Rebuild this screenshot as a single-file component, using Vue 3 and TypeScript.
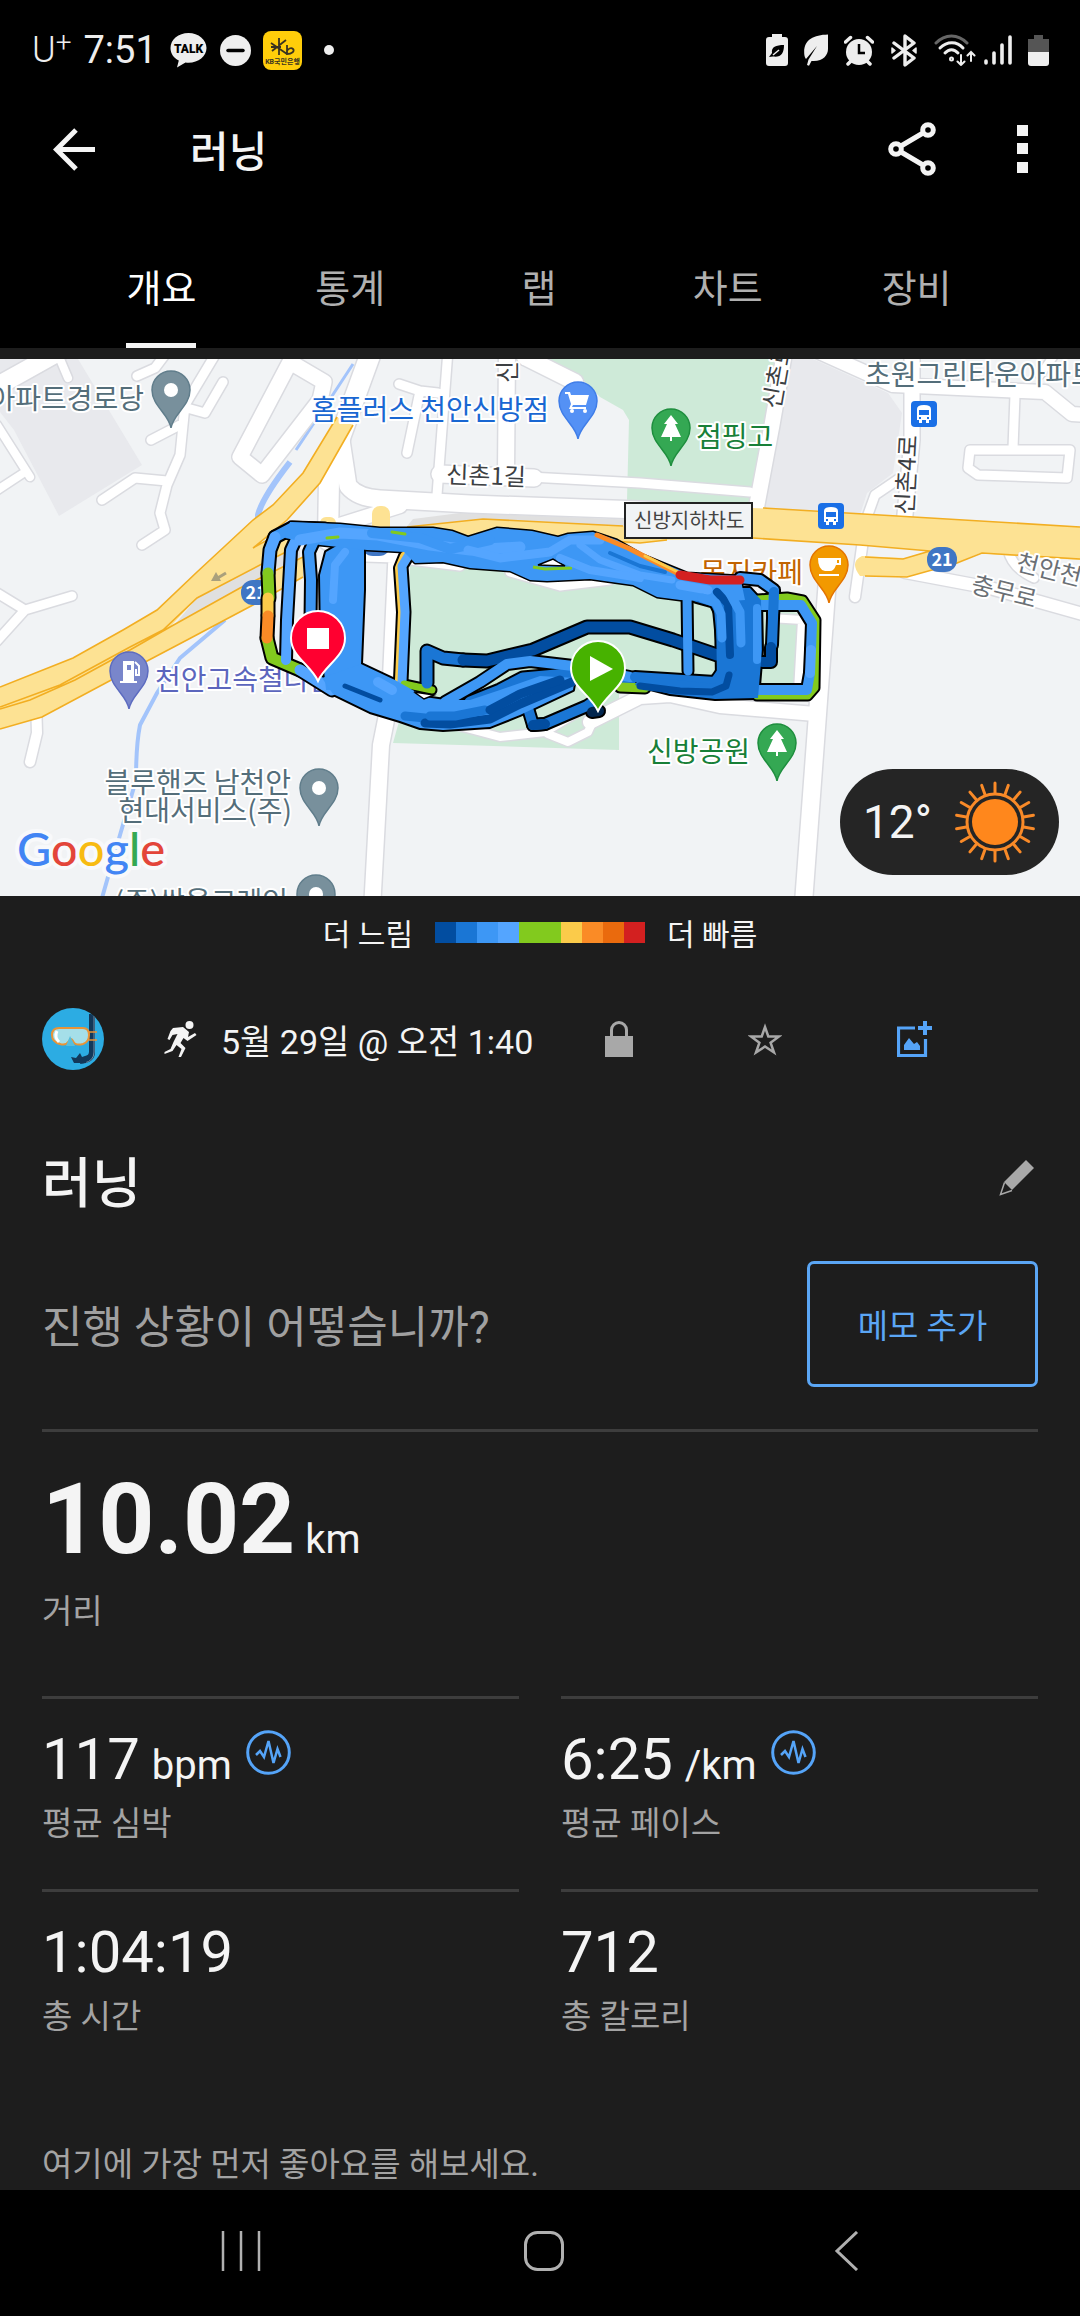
<script setup lang="ts">
interface Line { d: string; w: number; c?: string }
interface Pin { x: number; y: number; fill: string; edge: string; kind: 'dot' | 'cart' | 'tree' | 'cup' | 'fuel' }
interface MapLabel { text: string; x: number; y: number; color: string; size?: number; end?: boolean; turn?: number }

const tabs: string[] = ['개요', '통계', '랩', '차트', '장비']
const legend: string[] = ['#024da0', '#1a76d5', '#3d97f5', '#54a5ff', '#82ca1e', '#82ca1e', '#fbcb4a', '#fa8b26', '#ea6a0d', '#d32020']

const stats = [
  { value: '117', unit: 'bpm', label: '평균 심박', chart: true },
  { value: '6:25', unit: '/km', label: '평균 페이스', chart: true },
  { value: '1:04:19', unit: '', label: '총 시간', chart: false },
  { value: '712', unit: '', label: '총 칼로리', chart: false },
]

const rays: number[] = Array.from({ length: 18 }, (_, i) => i * 20)

const roads: Line[] = [
  { d: 'M-6 388 L62 350', w: 18 }, { d: 'M57 352 L68 378', w: 8 },
  { d: 'M-3 425 L30 477 M22 474 L-4 491', w: 8 },
  { d: 'M215 355 L185 405 L180 455 L167 485 L160 513 L165 530 L142 545 M137 376 L155 368 L167 352 M187 408 L205 413 L223 382 M180 425 L151 440 M167 481 L135 478 L102 500', w: 9 },
  { d: 'M-3 593 L25 610 L72 596 M25 610 L-3 641', w: 9 },
  { d: 'M290 362 L324 382 L320 400 L262 475 L240 457 Z', w: 15 },
  { d: 'M372 350 L341 435 L329 480 L328 540', w: 20 },
  { d: 'M341 440 L348 486 Q358 498 380 499 L470 504 L640 510 L760 515', w: 17 },
  { d: 'M330 528 L400 506', w: 14 },
  { d: 'M448 350 L437 495 M399 384 L420 391 L438 393 M420 391 L407 453', w: 9 },
  { d: 'M507 350 L506 475', w: 16 }, { d: 'M440 474 L534 478', w: 17 },
  { d: 'M530 477 L640 483 L750 492', w: 9 }, { d: 'M525 357 L575 382', w: 16 },
  { d: 'M785 350 L772 425 L755 515', w: 15 },
  { d: 'M815 350 L893 385 L1045 392 L1072 414 L1090 415', w: 14 },
  { d: 'M912 350 L912 440 L904 525', w: 15 }, { d: 'M900 478 L875 495 L866 520', w: 9 },
  { d: 'M1015 395 L1013 448 M970 450 L1070 450 L1067 478 L978 475 L968 468 Z', w: 9 },
  { d: 'M863 540 L855 597', w: 10 }, { d: 'M905 572 L990 588 L1090 616', w: 12 },
  { d: 'M1008 550 Q1012 568 1034 578', w: 9 },
  { d: 'M828 572 L823 640 L803 910', w: 17 },
  { d: 'M590 722 L640 697 L670 695 L720 706 L815 714', w: 14 },
  { d: 'M392 690 L381 745 L372 910', w: 16 },
  { d: 'M395 545 L388 700 M350 555 L410 557', w: 12 },
  { d: 'M36 700 L37 733 L30 762', w: 10 },
  { d: 'M455 725 L500 737 L545 732 L590 705 M548 734 L568 742 L588 732 L597 712', w: 8 },
  { d: 'M410 560 L460 566 M510 572 L560 586 L610 580', w: 9 },
  { d: 'M770 618 L802 620 L798 692', w: 8 },
  { d: 'M1040 375 L1058 350', w: 8 },
]

const track: Line[] = [
  { d: 'M325 529 L292 528 L275 537', c: '#3d97f5', w: 11 },
  { d: 'M275 537 L270 550 L268 573', c: '#54a5ff', w: 11 },
  { d: 'M267 638 L272 658 L300 670', c: '#82ca1e', w: 11 },
  { d: 'M268 573 L269 598', c: '#82ca1e', w: 11 },
  { d: 'M268 598 L268 615', c: '#fbcb4a', w: 11 },
  { d: 'M268 616 L267 638', c: '#fa8b26', w: 11 },
  { d: 'M300 670 L316 680 L332 690', c: '#54a5ff', w: 11 },
  { d: 'M298 535 L291 550 L287 620 L286 660', c: '#54a5ff', w: 10 },
  { d: 'M316 537 L309 552 L311 580 L310 660', c: '#3d97f5', w: 10 },
  { d: 'M404 556 L399 568 L402 612 L399 680', c: '#fbcb4a', w: 8 },
  { d: 'M410 553 L402 566 L405 612 L402 682', c: '#54a5ff', w: 9 },
  { d: 'M404 684 L432 690', c: '#82ca1e', w: 7 },
  { d: 'M427 683 L427 651 L443 658 L463 660', c: '#1a76d5', w: 11 },
  { d: 'M463 660 L487 661 L533 650 L587 627 L630 627 L673 640 L717 655', c: '#024da0', w: 11 },
  { d: 'M527 705 L533 725 L545 724 L587 706 L596 700', c: '#1a76d5', w: 10 },
  { d: 'M533 725 L545 724', c: '#024da0', w: 10 },
  { d: 'M592 712 L599 711', c: '#02264f', w: 10 },
  { d: 'M470 702 L500 690 L523 678 L567 674 L605 680 L630 683', c: '#1a76d5', w: 11 },
  { d: 'M445 702 L480 682 L507 664 L530 661 L573 666 L630 677', c: '#3d97f5', w: 10 },
  { d: 'M620 687 L645 688', c: '#82ca1e', w: 9 },
  { d: 'M758 599 L787 597 L803 600 L816 620 L815 688 L808 696 L757 696', c: '#82ca1e', w: 7 },
  { d: 'M757 605 L801 605 L812 623 L811 650 M810 673 L807 690 L757 690', c: '#3d97f5', w: 10 },
  { d: 'M811 650 L810 673', c: '#54a5ff', w: 10 },
  { d: 'M740 578 L760 580 L774 590 L773 615', c: '#3d97f5', w: 10 },
  { d: 'M774 592 L772 645', c: '#1a76d5', w: 10 },
  { d: 'M771 647 L771 662 L762 662', c: '#024da0', w: 10 },
  { d: 'M635 677 L715 682 L727 665', c: '#1a76d5', w: 10 },
  { d: 'M697 597 L715 602 L721 614 L722 680', c: '#1a76d5', w: 10 },
  { d: 'M687 595 L688 671', c: '#3d97f5', w: 9 },
]

/* Stretches where many laps overlap into one solid area. */
const topBand = 'M290 522 L340 524 L380 528 L433 528 L452 531 L468 537 L497 528 L532 531 L558 537 L568 534 L593 532 L617 540 L643 555 L660 562 L687 573 L740 576 L745 600 L720 602 L680 600 L657 597 L633 585 L590 579 L547 581 L530 580 L510 571 L470 568 L443 562 L415 563 L404 552 L367 550 L320 545 L285 538 Z'
const lowBand = 'M322 678 L333 694 L370 712 L400 721 L420 728 L443 730 L490 727 L520 715 L573 690 L575 678 L540 676 L500 690 L470 700 L445 700 L425 697 L395 680 L361 664 Z'
const westMass = 'M326 552 L340 544 L364 549 L364 590 L361 664 L370 690 L326 690 L321 640 L320 575 Z'
const eastMass = 'M712 588 L750 588 L761 600 L762 650 L758 698 L715 699 L670 694 L635 685 L640 676 L715 684 L720 672 Z'

const shades: Line[] = [
  { d: 'M300 540 L340 533 L378 535 L430 545 L470 550 L520 547', c: '#54a5ff', w: 11 },
  { d: 'M372 533 L420 538 L450 549 L490 540', c: '#3d97f5', w: 10 },
  { d: 'M468 550 L500 558 L550 552 L570 540 L600 540', c: '#54a5ff', w: 9 },
  { d: 'M580 545 L600 560 L640 575 L672 580', c: '#54a5ff', w: 7 },
  { d: 'M560 558 L590 570 L640 578', c: '#54a5ff', w: 8 },
  { d: 'M610 553 L640 566 L665 572', c: '#1a76d5', w: 4 },
  { d: 'M680 585 L708 590', c: '#54a5ff', w: 9 },
  { d: 'M345 552 L335 565 L333 600', c: '#54a5ff', w: 8 },
  { d: 'M392 532 L405 534 M327 538 L338 537', c: '#82ca1e', w: 3 },
  { d: 'M597 535 L628 548 L677 573', c: '#fa8b26', w: 5 },
  { d: 'M645 556 L678 572', c: '#fbcb4a', w: 3 },
  { d: 'M680 575 L710 580 L740 580', c: '#d32020', w: 9 },
  { d: 'M717 592 L728 604 L730 655', c: '#024da0', w: 8 },
  { d: 'M640 686 L680 691 L712 692 L726 686 L729 675', c: '#024da0', w: 7 },
  { d: 'M702 598 L716 603 L721 614 L722 638', c: '#3d97f5', w: 9 },
  { d: 'M728 590 L740 612 L741 643', c: '#3d97f5', w: 9 },
  { d: 'M757 608 L757 660', c: '#3d97f5', w: 8 },
  { d: 'M378 682 L392 690', c: '#54a5ff', w: 10 },
  { d: 'M345 686 L380 700', c: '#024da0', w: 5 },
  { d: 'M405 716 L425 718', c: '#1a76d5', w: 9 },
  { d: 'M425 723 L450 724 L490 719 L520 704 L572 682', c: '#024da0', w: 9 },
  { d: 'M430 716 L455 716 L485 710', c: '#1a76d5', w: 9 },
  { d: 'M490 710 L520 694 L560 680', c: '#024da0', w: 9 },
]

const pins: Pin[] = [
  { x: 171, y: 390, fill: '#78909c', edge: '#607d8b', kind: 'dot' },
  { x: 578, y: 401, fill: '#5491f5', edge: '#3f7de8', kind: 'cart' },
  { x: 671, y: 428, fill: '#34a853', edge: '#1e8e3e', kind: 'tree' },
  { x: 829, y: 565, fill: '#f29900', edge: '#e37400', kind: 'cup' },
  { x: 129, y: 671, fill: '#7986cb', edge: '#5c6bc0', kind: 'fuel' },
  { x: 319, y: 788, fill: '#78909c', edge: '#607d8b', kind: 'dot' },
  { x: 316, y: 894, fill: '#78909c', edge: '#607d8b', kind: 'dot' },
  { x: 777, y: 743, fill: '#34a853', edge: '#1e8e3e', kind: 'tree' },
]

const labels: MapLabel[] = [
  { text: '아파트경로당', x: 144, y: 409, color: '#546e7a', end: true },
  { text: '홈플러스 천안신방점', x: 549, y: 420, color: '#1967d2', end: true },
  { text: '점핑고', x: 696, y: 447, color: '#188038' },
  { text: '초원그린타운아파트', x: 865, y: 385, color: '#546e7a' },
  { text: '신', x: 516, y: 383, color: '#3c4043', size: 24, turn: -90 },
  { text: '신촌로', x: 780, y: 410, color: '#3c4043', size: 24, turn: -80 },
  { text: '신촌4로', x: 913, y: 515, color: '#3c4043', size: 24, turn: -87 },
  { text: '신촌1길', x: 446, y: 483, color: '#3c4043', size: 24, turn: 2 },
  { text: '목지카페', x: 803, y: 583, color: '#c26401', end: true },
  { text: '천안천', x: 1015, y: 570, color: '#6b7075', size: 24, turn: 14 },
  { text: '충무로', x: 970, y: 592, color: '#6b7075', size: 24, turn: 14 },
  { text: '천안고속철나들목', x: 155, y: 690, color: '#5c66bd' },
  { text: '블루핸즈 남천안', x: 291, y: 793, color: '#546e7a', end: true },
  { text: '현대서비스(주)', x: 292, y: 821, color: '#546e7a', end: true },
  { text: '(주)쌍용크레인', x: 288, y: 912, color: '#546e7a', end: true },
  { text: '신방공원', x: 750, y: 762, color: '#188038', end: true },
]
</script>

<template>
  <div class="screen">
    <header class="top">
      <div class="status">
        <div class="status-left">
          <span class="carrier">U<sup>+</sup></span>
          <span class="clock">7:51</span>
          <svg class="talk" viewBox="0 0 37 36" width="37" height="36">
            <path d="M18.500 1C8.500 1 .5 7.600 .5 16c0 5.500 3.300 10 8.300 12.600L7 35.500l8.500-5c1 .2 2 .2 3 .2 10 0 18-6.600 18-14.700S28.500 1 18.500 1z" fill="#eee" />
            <text x="18.500" y="20.500" text-anchor="middle" font-size="12" font-weight="900" fill="#000">TALK</text>
          </svg>
          <svg class="dnd" viewBox="0 0 31 31" width="31" height="31"><circle cx="15.500" cy="15.500" r="15.500" fill="#eee" /><path d="M8 15.500h15" stroke="#000" stroke-width="3.500" stroke-linecap="round" /></svg>
          <svg class="kb" viewBox="0 0 39 39" width="39" height="39">
            <rect width="39" height="39" rx="8" fill="#ffcd0a" />
            <path d="M16 7v17M8 12l16 11M23 9L9 20M8 16h10M24 14v9c5 0 8-3 6-5s-5 0-6 2" fill="none" stroke="#3a3320" stroke-width="1.800" />
            <text x="19.500" y="33" text-anchor="middle" font-size="7" font-weight="700" fill="#3a3320">KB국민은행</text>
          </svg>
          <span class="more-dot"></span>
        </div>
        <div class="status-right">
          <svg viewBox="0 0 22 32" width="22" height="32"><path d="M6 0h10v3h3a3 3 0 0 1 3 3v23a3 3 0 0 1-3 3H3a3 3 0 0 1-3-3V6a3 3 0 0 1 3-3h3z" fill="#eee" /><path d="M18 11c-8 0-13 2-12 8l-3 4 4-.5c8 1 11-3 11-11.500zM3 23l9-6" fill="#000" /><path d="M7 21l6-5" stroke="#eee" stroke-width="1.500" /></svg>
          <svg viewBox="0 0 24 32" width="24" height="32"><path d="M24 .5C9 1-1 6 .3 20.500c.2 2.500 1 3.500 1.700 4.500L13 12 4.500 25.500 3 31l2 .8L7.500 27C19 28 24 21 24 15z" fill="#eee" /></svg>
          <svg viewBox="0 0 30 31" width="30" height="31"><circle cx="15" cy="17" r="13" fill="#eee" /><path d="M1.500 7l5-4.500M28.500 7l-5-4.500M4 29l4-4M26 29l-4-4" stroke="#eee" stroke-width="3.500" stroke-linecap="round" /><path d="M15 9v9h6" fill="none" stroke="#000" stroke-width="2.500" /></svg>
          <svg viewBox="0 0 28 33" width="28" height="33" fill="none" stroke="#eee" stroke-width="3.400" stroke-linejoin="round" stroke-linecap="round"><path d="M4 9l20 15-9 7V2l9 7L4 24" /><path d="M2 14l3 2.500L2 19zM26 14l-3 2.500 3 2.500z" stroke-width="1.500" fill="#eee" /></svg>
          <svg viewBox="0 0 42 32" width="42" height="32" fill="none" stroke="#eee" stroke-width="3" stroke-linecap="round"><path d="M2 9c9-9.500 22-9.500 31 0" stroke="#666" /><path d="M6 14c7-7 17-7 23 0M11 19c4-4.500 9-4.500 13 0" /><circle cx="17.500" cy="25" r="1" /><path d="M27 21v10m-3.500-3.500l3.500 3.500 3.500-3.500M37 27V18m-3.500 3.500L37 18l3.500 3.500" stroke-width="2" /></svg>
          <svg class="signal" viewBox="0 0 28 30" width="28" height="30" stroke="#eee" stroke-width="3.600" stroke-linecap="round"><path d="M2 26v2M10 18v10M18 10v18M26 2v26" /></svg>
          <svg viewBox="0 0 21 31" width="21" height="31"><path d="M6 0h9v4h6v13H0V4h6z" fill="#555" /><path d="M0 17h21v11a3 3 0 0 1-3 3H3a3 3 0 0 1-3-3z" fill="#eee" /></svg>
        </div>
      </div>

      <div class="appbar">
        <button aria-label="뒤로"><svg viewBox="0 0 43 43" width="43" height="43" fill="none" stroke="#f4f4f4" stroke-width="5"><path d="M42 21.500H4M23 2L3.500 21.500 23 41" /></svg></button>
        <h1>러닝</h1>
        <button class="share" aria-label="공유"><svg viewBox="0 0 48 54" width="48" height="54" fill="none" stroke="#f4f4f4" stroke-width="5"><circle cx="40" cy="8" r="5.300" /><circle cx="8" cy="27" r="5.300" /><circle cx="40" cy="46" r="5.300" /><path d="M13 24l22-13M13 30l22 13" /></svg></button>
        <button aria-label="더보기"><svg viewBox="0 0 12 48" width="12" height="48" fill="#f4f4f4"><path d="M0 0h11v11H0zM0 18h11v11H0zM0 37h11v11H0z" /></svg></button>
      </div>

      <nav class="tabs">
        <button v-for="(tab, i) in tabs" :key="tab" :class="['tab', { active: i === 0 }]"><span>{{ tab }}</span></button>
      </nav>
    </header>

    <section class="map">
      <svg class="map-svg" viewBox="0 359 1080 537" role="img" aria-label="러닝 경로">
        <rect y="359" width="1080" height="537" fill="#f1f3f5" />
        <g fill="#e8e9ed">
          <path d="M0 359H78L142 465 59 516 14 430 0 412z" />
          <path d="M785 359L763 508 860 515 867 493 893 473 902 413 888 393 813 359z" />
        </g>
        <g fill="#ceead8">
          <path d="M545 359L583 380 600 397 623 410 629 420 627 500 755 507 775 359z" />
          <path d="M410 563L480 565 560 583 630 580 700 600 800 613 800 695 619 690 619 750 393 743 405 700z" />
        </g>
        <path d="M413 519L460 513 640 520V535H400z M197 598L300 540V570L170 630z" fill="#e0e0e0" />
        <g fill="none" stroke="#a3c4fb">
          <path d="M353 364L334 393 296 450" stroke-width="3" />
          <path d="M290 462Q262 498 258 515V525" stroke-width="6" />
          <path d="M225 620L180 658 157 693 140 725Q136 745 136 780L120 835 102 898" stroke-width="4" />
        </g>
        <g fill="none" stroke="#dadbe0" stroke-linecap="round" stroke-linejoin="round">
          <path v-for="(r, i) in roads" :key="i" :d="r.d" :stroke-width="r.w + 3" />
        </g>
        <g fill="none" stroke="#fff" stroke-linecap="round" stroke-linejoin="round">
          <path v-for="(r, i) in roads" :key="i" :d="r.d" :stroke-width="r.w" />
        </g>
        <g fill="#fde293">
          <path d="M337 417L303 473 273 505 253 520 197 572 157 610 123 630 73 658 0 687V729L42 717 130 670 187 640 253 605 303 577V557L240 588 170 627 197 598 260 565 300 545V525L253 548 287 520 320 483 353 425z" />
          <path d="M407 527L483 519 623 526 753 508 880 515 1080 527V560L1000 555 980 553 957 563 907 577 860 576Q849 562 862 556L905 558 930 551 860 545 755 538 667 540 640 543 400 555z" />
          <rect x="372" y="506" width="18" height="30" rx="8" /><rect x="320" y="517" width="16" height="14" rx="6" />
        </g>
        <g fill="none" stroke="#f2ae22" stroke-width="1.600">
          <path d="M337 417L303 473 273 505 253 520 197 572 157 610 123 630 73 658 0 687M353 425L320 483 287 520 253 548 300 522M300 545L260 565 197 598 163 630 130 647 60 685 0 707M303 557L240 588 170 627 130 650 75 680 30 700 0 709M303 577L253 605 187 640 130 670 42 717 0 729M407 527L483 519 623 526M763 508L880 515 1080 527M753 538L860 545 930 551 903 559 865 557M865 576L907 577 957 563 982 553 1080 559M667 540L640 543 600 540" />
        </g>
        <path d="M226 573l-10 6" stroke="#aaa07c" stroke-width="3" /><path d="M211 581l5-9 5 9z" fill="#aaa07c" />

        <g v-for="(s, i) in [[942, 559], [256, 592], [376, 543]]" :key="i">
          <rect :x="s[0] - 15" :y="s[1] - 12" width="30" height="25" rx="12" fill="#3f76c4" />
          <text :x="s[0]" :y="s[1] + 7" text-anchor="middle" font-size="18" font-weight="700" fill="#fff" class="kr">21</text>
        </g>

        <g class="labels kr">
          <text v-for="l in labels" :key="l.text" :fill="l.color" :font-size="l.size ?? 28" :text-anchor="l.end ? 'end' : 'start'" :transform="`translate(${l.x} ${l.y}) rotate(${l.turn ?? 0})`">{{ l.text }}</text>
        </g>

        <g v-for="(b, i) in [[831, 516], [924, 414]]" :key="i" :transform="`translate(${b[0]} ${b[1]})`">
          <rect x="-13" y="-13" width="26" height="26" rx="4" fill="#1a6fe6" />
          <path d="M-7-5q0-4 7-4t7 4V6H5v3H2V6h-4v3h-3V6h-2z" fill="#fff" />
          <path d="M-5-4H5v5H-5zM-5 3h2v2h-2zM3 3h2v2H3z" fill="#1a6fe6" />
        </g>

        <rect x="625" y="503" width="127" height="35" fill="#f1f3f5" stroke="#222" stroke-width="2" />
        <text x="634" y="528" font-size="20" fill="#444" class="kr">신방지하차도</text>

        <g v-for="(p, i) in pins" :key="i" :transform="`translate(${p.x} ${p.y})`">
          <path d="M0 38C-2 24-19 16-19 0A19 19 0 1 1 19 0C19 16 2 24 0 38z" :fill="p.fill" :stroke="p.edge" stroke-width="1.500" />
          <circle v-if="p.kind === 'dot'" r="7" fill="#fff" />
          <path v-else-if="p.kind === 'tree'" d="M0-13L7-4H4L10 9H1V13H-1V9H-10L-4-4H-7z" fill="#fff" />
          <g v-else-if="p.kind === 'cart'" fill="#fff"><path d="M-13-9h5l1 3H11L8 4H-5l-1 2H8v2H-9l2-5-3-10h-3z" /><circle cx="-6" cy="10" r="2" /><circle cx="7" cy="10" r="2" /></g>
          <g v-else-if="p.kind === 'cup'" fill="#fff"><path d="M-11-7H12v7H7q-2 6-6 6h-5q-7-1-7-13zM8-5v3h2v-3z" fill-rule="evenodd" /><path d="M-10 9H10v2H-10z" /></g>
          <g v-else fill="#fff"><path d="M-6-10H5V10H8v2H-9v-2h3zM-2-6v5h4v-5z" fill-rule="evenodd" /><path d="M6-9l4 4v9H7v-6" fill="none" stroke="#fff" stroke-width="2" /></g>
        </g>

        <g stroke="#000" fill="none" stroke-linejoin="round" stroke-linecap="round">
          <path v-for="(t, i) in track" :key="i" :d="t.d" :stroke-width="t.w + 4" />
          <path :d="topBand" stroke-width="3" />
          <path :d="lowBand" stroke-width="4" />
          <path :d="westMass" stroke-width="4" />
          <path :d="eastMass" stroke-width="4" />
        </g>
        <g fill="none" stroke-linejoin="round" stroke-linecap="round">
          <path v-for="(t, i) in track" :key="i" :d="t.d" :stroke="t.c" :stroke-width="t.w" />
        </g>
        <path :d="eastMass" fill="#1a76d5" />
        <path :d="westMass" fill="#3d97f5" />
        <path :d="lowBand" fill="#3d97f5" />
        <path :d="topBand" fill="#3d97f5" />
        <path d="M538 565L553 559 565 566z" fill="#fff" stroke="#000" stroke-width="1.500" />
        <path d="M533 567L545 569 572 568" fill="none" stroke="#82ca1e" stroke-width="3" />
        <path d="M414 692L434 695 424 699z" fill="#fff" stroke="#000" stroke-width="1.500" />
        <g fill="none" stroke-linejoin="round" stroke-linecap="round">
          <path v-for="(s, i) in shades" :key="i" :d="s.d" :stroke="s.c" :stroke-width="s.w" />
        </g>

        <path d="M318 681C311 665 291 657 291 638A27 27 0 1 1 345 638C345 657 325 665 318 681z" fill="#ff0030" stroke="#fff" stroke-width="2" />
        <rect x="307" y="628" width="22" height="21" fill="#fff" />
        <path d="M598 711C590 694 571 687 571 668A27 27 0 1 1 625 668C625 687 606 694 598 711z" fill="#47b200" stroke="#fff" stroke-width="2" />
        <path d="M590 656L613 669 590 681z" fill="#fff" />

        <text class="google" x="17" y="866" font-size="47"><tspan fill="#4285f4">G</tspan><tspan fill="#e3453a">o</tspan><tspan fill="#f7bb12">o</tspan><tspan fill="#4285f4">g</tspan><tspan fill="#34a853">l</tspan><tspan fill="#e3453a">e</tspan></text>
      </svg>

      <div class="weather">
        <span>12°</span>
        <svg viewBox="-41 -41 82 82" width="82" height="82">
          <circle r="23" fill="#ff871c" /><circle r="28" fill="none" stroke="#f98a28" stroke-width="3" />
          <path v-for="a in rays" :key="a" d="M0-29V-39" :transform="`rotate(${a})`" stroke="#f98a28" stroke-width="3" stroke-linecap="round" />
        </svg>
      </div>
    </section>

    <div class="legend">
      <span>더 느림</span>
      <div class="scale"><i v-for="(c, i) in legend" :key="i" :style="{ background: c }"></i></div>
      <span>더 빠름</span>
    </div>

    <main class="content">
      <div class="meta">
        <svg viewBox="0 0 62 62" width="62" height="62">
          <defs><clipPath id="face"><circle cx="31" cy="31" r="31" /></clipPath></defs>
          <g clip-path="url(#face)">
            <rect width="62" height="62" fill="#2cace3" />
            <path d="M50 6v38q0 8-12 9" fill="none" stroke="#12385a" stroke-width="6" /><path d="M52 8v36q0 9-10 11" fill="none" stroke="#6f8ba3" stroke-width="1" />
            <path d="M29 49l5 1 4-5 2 4 6-2-2 8H32z" fill="#12385a" />
            <path d="M10 27q0-7 7-7h24q6 0 6 7t-6 9q-8 2-10-3-2-4-4 0-3 5-9 3-8-2-8-9z" fill="#a5dfe9" stroke="#e99437" stroke-width="2" />
            <path d="M15 23q-3 6 2 11" fill="none" stroke="#fff" stroke-width="3" /><path d="M28 28l5 10H24z" fill="#55bede" /><path d="M47 24h8M47 32h8" stroke="#e99437" stroke-width="1.500" />
          </g>
        </svg>
        <div class="when">
          <svg viewBox="0 0 34 36" width="34" height="36"><circle cx="26.500" cy="4" r="4" fill="#f4f4f4" /><path d="M10 7l10-1 6 5-1 5 7-4 1.500 2-9 6-4-3-3 5 5 5-5 10-2-1 3-8-5-4-4 6-8 3v-2l6-3 3-7 4-8-5 1-3 5-2-1 3-8z" fill="#f4f4f4" /></svg>
          <time>5월 29일 @ 오전 1:40</time>
        </div>
        <div class="actions">
          <button aria-label="공개 설정"><svg viewBox="0 0 28 36" width="28" height="36"><path d="M6.500 16V9a7.500 7.500 0 0 1 15 0v7" fill="none" stroke="#a8a8a8" stroke-width="3" /><path d="M0 15h28v21H0z" fill="#a8a8a8" /></svg></button>
          <button aria-label="즐겨찾기"><svg viewBox="0 0 34 33" width="34" height="33"><path d="M17 4l3.300 9.500H31l-8.400 6.200L26 29.500l-9-6-9 6 3.400-9.800L3 13.500h10.700z" fill="none" stroke="#a8a8a8" stroke-width="2.500" /></svg></button>
          <button aria-label="사진 추가"><svg viewBox="0 0 36 36" width="36" height="36"><path d="M18 7H1.500V34.500H28.500V18" fill="none" stroke="#55a4f8" stroke-width="3.200" /><path d="M28 0v14M21 7h14" stroke="#55a4f8" stroke-width="4" /><path d="M7 29V24l5-7 5 6 3-2 3 4v4z" fill="#55a4f8" /></svg></button>
        </div>
      </div>

      <div class="title-row">
        <h2>러닝</h2>
        <button aria-label="이름 편집"><svg viewBox="0 0 36 36" width="36" height="36"><path d="M27 0l8 8L13 30l-8-8z" fill="#a8a8a8" /><path d="M5.500 22.500L1.500 34.500 13 30.500" fill="none" stroke="#a8a8a8" stroke-width="1.500" /></svg></button>
      </div>

      <div class="note-row">
        <p>진행 상황이 어떻습니까?</p>
        <button>메모 추가</button>
      </div>

      <div class="distance">
        <div><b>10.02</b><span>km</span></div>
        <p>거리</p>
      </div>

      <div class="stats">
        <div v-for="s in stats" :key="s.label" class="stat">
          <div class="value">
            <span class="num">{{ s.value }}</span><span v-if="s.unit" class="unit">{{ s.unit }}</span>
            <svg v-if="s.chart" viewBox="0 0 45 45" width="45" height="45" fill="none" stroke="#55a4f8"><circle cx="22.500" cy="22.500" r="20.800" stroke-width="3" /><path d="M10 25l4-4 4 6 4.500-16 5 22 4-14 3 8" stroke-width="2.500" /></svg>
          </div>
          <p>{{ s.label }}</p>
        </div>
      </div>

      <p class="likes">여기에 가장 먼저 좋아요를 해보세요.</p>
    </main>

    <nav class="sysnav">
      <button aria-label="최근 앱"><svg viewBox="0 0 40 40" width="40" height="40" stroke="#b0b0b0" stroke-width="2.500"><path d="M2 0v40M20 0v40M38 0v40" /></svg></button>
      <button aria-label="홈"><svg viewBox="0 0 40 40" width="40" height="40" fill="none" stroke="#b0b0b0" stroke-width="3"><rect x="1.500" y="1.500" width="37" height="37" rx="12" /></svg></button>
      <button aria-label="뒤로"><svg viewBox="0 0 40 40" width="40" height="40" fill="none" stroke="#b0b0b0" stroke-width="3"><path d="M30 1L10 20l20 19" /></svg></button>
    </nav>
  </div>
</template>

<style>
body { margin: 0; background: #1d1d1d; }
</style>

<style scoped>
.screen {
  min-height: 100vh;
  display: flex;
  flex-direction: column;
  background: #1d1d1d;
  color: #f4f4f4;
  font-family: Roboto, "Noto Sans CJK KR", sans-serif;
}
svg { display: block; flex: none; }
.kr { font-family: "Noto Sans CJK KR", sans-serif; }
button { border: 0; padding: 0; background: none; color: inherit; font: inherit; cursor: pointer; }
h1, h2, p { margin: 0; font-weight: 400; }

.top { background: #000; }
.status { display: flex; justify-content: space-between; align-items: center; height: 100px; padding: 0 31px 0 32px; }
.status-left, .status-right { display: flex; align-items: center; }
.status-right { gap: 16px; }
.signal { margin: 0 0 0 -8px; }
.carrier { font-size: 36px; font-weight: 300; color: #eee; line-height: 40px; }
.carrier sup { font-size: 28px; line-height: 0; vertical-align: 10px; }
.clock { margin-left: 12px; font-size: 38px; color: #eee; line-height: 40px; }
.talk { margin-left: 13px; }
.dnd { margin-left: 13px; }
.kb { margin-left: 12px; }
.more-dot { width: 10px; height: 10px; margin-left: 22px; border-radius: 50%; background: #eee; }

.appbar { display: flex; align-items: center; height: 98px; padding: 0 51px 0 53px; }
.appbar h1 { flex: 1; margin-left: 94px; padding-top: 8px; font-size: 42px; font-weight: 500; line-height: 60px; }
.share { margin-right: 81px; }

.tabs { display: flex; height: 150px; padding: 0 69px 0 67px; }
.tab { flex: 1; display: flex; justify-content: center; color: #b0b0b0; font-size: 38px; }
.tab span { box-sizing: border-box; height: 100%; padding-top: 63px; line-height: 56px; border-bottom: 5px solid transparent; }
.tab.active { color: #fff; }
.tab.active span { border-color: #f4f4f4; }

.map { position: relative; margin-top: 11px; }
.map-svg { width: 100%; height: auto; }
.labels text, .google { paint-order: stroke; stroke: #fff; stroke-width: 4px; stroke-linejoin: round; }
.google { font-family: Lato, sans-serif; font-weight: 500; stroke-width: 8px; stroke: #f8f9fb; }
.weather {
  position: absolute; right: 21px; bottom: 21px;
  display: flex; align-items: center; justify-content: space-between;
  box-sizing: border-box; width: 219px; height: 106px; padding: 0 23px; border-radius: 53px;
  background: #252525; font-size: 46px;
}

.legend { display: flex; justify-content: center; align-items: center; gap: 22px; height: 72px; font-size: 30px; }
.scale { display: flex; height: 21px; }
.scale i { width: 21px; }

.content { padding: 0 42px; }
.meta { display: flex; align-items: center; height: 142px; }
.when { display: flex; align-items: center; gap: 24px; margin-left: 59px; font-size: 34px; }
.actions { display: flex; justify-content: space-between; align-items: center; width: 328px; margin-left: 72px; }
.title-row { display: flex; justify-content: space-between; align-items: center; height: 144px; }
.title-row h2 { padding-top: 6px; font-size: 54px; font-weight: 500; line-height: 76px; }
.title-row button { margin: 0 3px 8px 0; }
.note-row { display: flex; justify-content: space-between; align-items: center; padding: 7px 0 42px; }
.note-row p { font-size: 44px; color: #a0a0a0; }
.note-row button { box-sizing: border-box; width: 231px; height: 126px; border: 3px solid #5ba6f5; border-radius: 7px; font-size: 33px; color: #5ba6f5; }

.distance { box-sizing: border-box; height: 267px; padding-top: 38px; border-top: 3px solid #3d3d3d; }
.distance b { font-size: 98px; line-height: 100px; }
.distance span { margin-left: 10px; font-size: 40px; }
.distance p, .stat p, .likes { font-size: 33px; line-height: 48px; color: #a3a3a3; }
.distance p { margin-top: 18px; }

.stats { display: grid; grid-template-columns: 1fr 1fr; column-gap: 42px; }
.stat { box-sizing: border-box; height: 193px; padding-top: 26px; border-top: 3px solid #3d3d3d; }
.value { display: flex; align-items: baseline; height: 68px; }
.num { font-size: 58px; line-height: 68px; }
.unit { margin-left: 12px; font-size: 40px; line-height: 48px; }
.value svg { align-self: flex-start; margin: 5px 0 0 14px; }
.stat p { margin-top: 7px; }
.likes { margin-top: 59px; }

.sysnav { display: flex; box-sizing: border-box; justify-content: space-between; align-items: center; height: 126px; margin-top: auto; padding: 0 213px 5px 221px; background: #000; }
</style>
